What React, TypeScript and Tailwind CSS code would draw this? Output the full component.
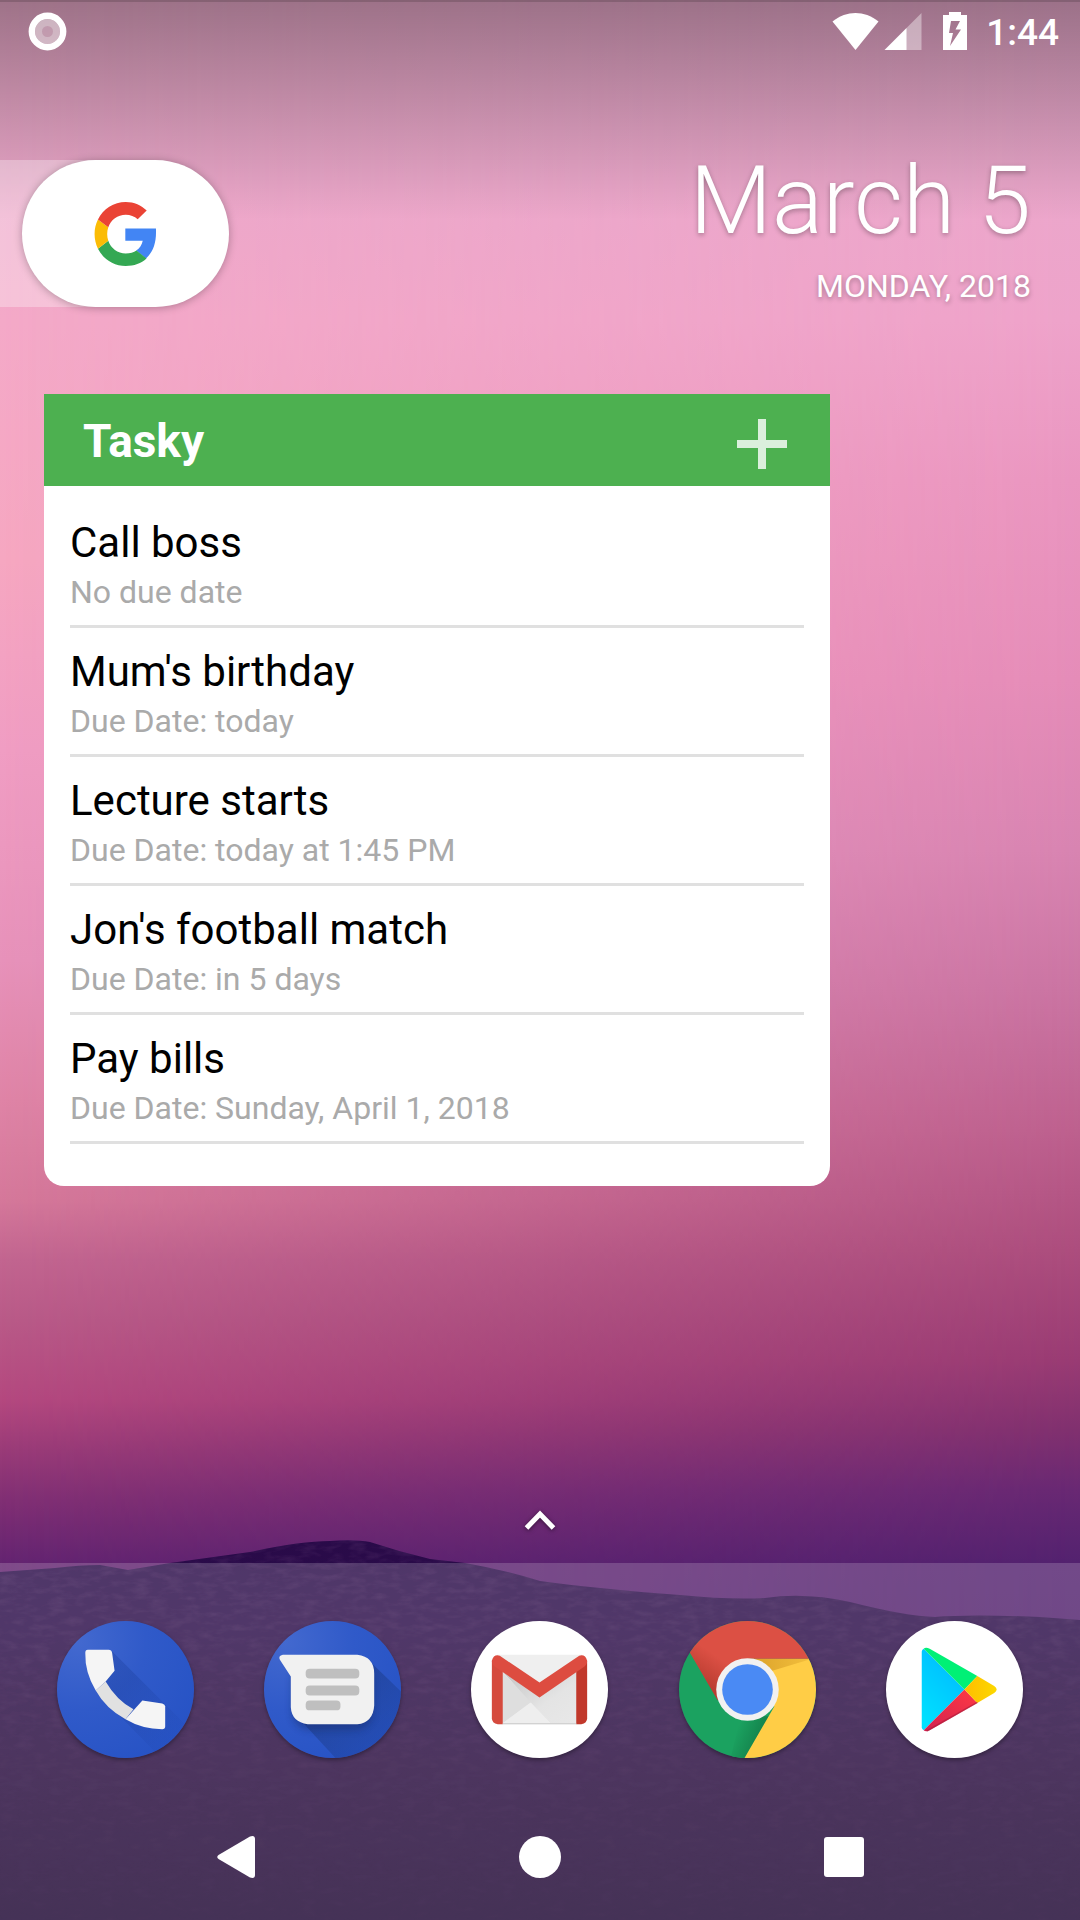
import type { ReactNode } from "react";

const tasks = [
  { title: "Call boss", due: "No due date" },
  { title: "Mum's birthday", due: "Due Date: today" },
  { title: "Lecture starts", due: "Due Date: today at 1:45 PM" },
  { title: "Jon's football match", due: "Due Date: in 5 days" },
  { title: "Pay bills", due: "Due Date: Sunday, April 1, 2018" },
];

function Wallpaper() {
  return (
    <div aria-hidden="true" className="absolute inset-0 overflow-hidden">
      <div className="absolute inset-0 bg-[linear-gradient(to_bottom,#e8a8c8_0px,#eca8ca_180px,#f4a9c8_320px,#f6a7c1_560px,#f09dc3_750px,#e792ba_960px,#df84a6_1100px,#d5789a_1200px,#c26590_1260px,#b95a88_1320px,#b4487f_1400px,#9a3b78_1450px,#812f74_1500px,#642471_1563px,#5c2270_1640px)]" />
      <div className="absolute inset-0 bg-[linear-gradient(to_bottom,#e4a6c8_0px,#eba7cb_180px,#eea3ca_320px,#ea96c0_480px,#e58cb8_680px,#d884b1_850px,#ca74a2_990px,#bd608e_1130px,#ac4d7d_1250px,#993b73_1360px,#80306f_1430px,#682873_1490px,#53226f_1563px,#50206c_1640px)] [mask-image:linear-gradient(to_right,transparent,black)]" />
      <svg className="absolute inset-x-0 bottom-0 h-[390px] w-full" viewBox="0 1530 1080 390" preserveAspectRatio="none">
        <defs>
          <linearGradient id="hill" x1="0" y1="0" x2="0" y2="1">
            <stop offset="0" stopColor="#290a49" />
            <stop offset="0.25" stopColor="#2a0c48" />
            <stop offset="0.6" stopColor="#26093c" />
            <stop offset="1" stopColor="#1d0632" />
          </linearGradient>
          <linearGradient id="grainFade" x1="0" y1="0" x2="0" y2="1">
            <stop offset="0" stopColor="#fff" stopOpacity="0.3" />
            <stop offset="0.7" stopColor="#fff" stopOpacity="0.08" />
            <stop offset="1" stopColor="#fff" stopOpacity="0.04" />
          </linearGradient>
          <filter id="grain" x="0" y="0" width="100%" height="100%">
            <feTurbulence type="fractalNoise" baseFrequency="0.06 0.16" numOctaves="3" seed="4" />
            <feColorMatrix values="0 0 0 0 0.45  0 0 0 0 0.2  0 0 0 0 0.45  0.9 0 0 0 -0.36" />
          </filter>
          <clipPath id="hillClip">
            <path d="M0 1572 L55 1568 Q80 1565 100 1565 L128 1570 L170 1563 L250 1552 Q300 1541 330 1541 Q355 1539 370 1542 Q400 1552 430 1559 L465 1563 Q505 1570 540 1581 Q600 1589 680 1595 Q730 1600 765 1598 Q805 1592 850 1602 Q905 1616 935 1617 Q970 1614 1040 1617 L1080 1620 V1920 H0 Z" />
          </clipPath>
          <mask id="grainMask">
            <rect x="0" y="1530" width="1080" height="390" fill="url(#grainFade)" />
          </mask>
        </defs>
        <g clipPath="url(#hillClip)">
          <rect x="0" y="1530" width="1080" height="390" fill="url(#hill)" />
          <g mask="url(#grainMask)">
            <rect x="0" y="1530" width="1080" height="390" filter="url(#grain)" />
          </g>
        </g>
      </svg>
      <div className="absolute inset-x-0 top-0 h-[220px] bg-linear-to-b from-black/32 to-transparent" />
      <div className="absolute inset-x-0 top-0 h-0.5 bg-black/15" />
    </div>
  );
}

function StatusBar() {
  return (
    <header className="flex h-[63px] items-start justify-between pt-3 pr-[21px] pl-7">
      <svg className="size-[39px]" viewBox="0 0 39 39" aria-hidden="true">
        <circle cx="19.5" cy="19.5" r="12.5" fill="#fff" opacity=".45" />
        <circle cx="19.5" cy="19.5" r="5.5" fill="#b37f9a" opacity=".5" />
        <circle cx="19.5" cy="19.5" r="15.7" fill="none" stroke="#fff" strokeWidth="6.4" />
      </svg>
      <div className="flex items-start text-white">
        <svg className="mt-px h-[37px] w-[47px]" viewBox="0 0 47 37" aria-hidden="true">
          <path fill="#fff" d="M.5 8.5C15-2.8 32-2.8 46.500 8.500L23.500 37Z" />
        </svg>
        <svg className="mt-px ml-[5px] h-[37px] w-[38px]" viewBox="0 0 38 37" aria-hidden="true">
          <path fill="#fff" opacity=".4" d="M22 15.500 37.500 0V37H22Z" />
          <path fill="#fff" d="M.5 37 22.500 15V37Z" />
        </svg>
        <svg className="ml-[21px] h-[38px] w-6" viewBox="0 0 24 38" aria-hidden="true">
          <path fill="#fff" fillRule="evenodd" d="M6 0H18V3H24V38H0V3H6ZM8 9 6 21H10L7 34 18 17.500H12.500L17 9Z" />
        </svg>
        <time className="ml-[19px] font-medium text-[37px] leading-[42px]">1:44</time>
      </div>
    </header>
  );
}

function GoogleLogo() {
  return (
    <svg className="h-16 w-16" viewBox="0 0 47 47" aria-hidden="true">
      <path fill="#4285f4" d="M45.500 19.500H23V28.500H35.800C35.100 31.800 33.500 34 31 35.700L38.200 41.500C43 37 46 31 45.500 19.500Z" />
      <path fill="#34a853" d="M23.300 47C29.500 47 34.700 45 38.600 41.500L31.200 35.700C29.200 37 26.500 37.900 23.300 37.900C17.400 37.900 12.300 34 10.500 28.500L2.900 34.300C6.700 41.900 14.500 47 23.300 47Z" />
      <path fill="#fbbc05" d="M10.500 28.500C9.400 25.200 9.400 21.800 10.500 18.600L2.900 12.800C-.4 19.400-.4 27.600 2.900 34.300Z" />
      <path fill="#ea4335" d="M23.300 9.300C26.700 9.300 29.700 10.400 32.100 12.700L38.700 6.200C34.700 2.500 29.500 0 23.300 0C14.500 0 6.700 5.200 2.900 12.800L10.500 18.600C12.300 13.100 17.400 9.300 23.300 9.300Z" />
    </svg>
  );
}

function SearchAndDate() {
  return (
    <section className="flex items-start justify-between pt-[97px]">
      <div className="relative h-[147px] w-[229px] pl-[22px]">
        <div className="absolute inset-y-0 left-0 w-24 bg-white/30" />
        <button
          type="button"
          aria-label="Google search"
          className="relative flex h-full w-full items-center justify-center rounded-full bg-white shadow-[0_1px_8px_rgba(0,0,0,0.28)]"
        >
          <GoogleLogo />
        </button>
      </div>
      <div className="pr-[49px] text-right text-white [text-shadow:0_2px_5px_rgba(0,0,0,0.3)]">
        <p className="font-light text-[95px] leading-[82px]">March 5</p>
        <p className="mt-6 text-[32px] leading-10">MONDAY, 2018</p>
      </div>
    </section>
  );
}

function TaskWidget() {
  return (
    <section className="mt-[87px] ml-11 w-[786px] max-w-full overflow-hidden rounded-b-[20px] bg-white">
      <div className="flex h-[92px] items-center justify-between bg-[#4db050] pr-[43px] pl-[39px]">
        <h1 className="mt-0.5 font-bold text-[46px] leading-14 text-white">Tasky</h1>
        <button type="button" aria-label="Add task" className="mt-2">
          <svg className="size-[50px]" viewBox="0 0 50 50" aria-hidden="true">
            <path fill="#fff" opacity=".8" d="M21 0H29V21H50V29H29V50H21V29H0V21H21Z" />
          </svg>
        </button>
      </div>
      <ul className="px-[26px] pt-[13px] pb-[42px]">
        {tasks.map((t) => (
          <li key={t.title} className="border-b-3 border-[#e0e0e0] pt-[19px] pb-[13px]">
            <p className="text-[42px] leading-[50px] text-black">{t.title}</p>
            <p className="mt-1 text-[32px] leading-10 text-[#aaaaaa]">{t.due}</p>
          </li>
        ))}
      </ul>
    </section>
  );
}

function Phone() {
  return (
    <svg className="size-full" viewBox="0 0 138 138" aria-hidden="true">
      <defs>
        <radialGradient id="blueDisc" cx=".15" cy=".15" r="1">
          <stop offset="0" stopColor="#4369cf" />
          <stop offset=".5" stopColor="#305ac9" />
          <stop offset="1" stopColor="#2753c5" />
        </radialGradient>
        <linearGradient id="phoneShade" x1=".3" y1=".3" x2=".9" y2=".9">
          <stop offset="0" stopColor="#1c3e9c" stopOpacity=".35" />
          <stop offset="1" stopColor="#1c3e9c" stopOpacity="0" />
        </linearGradient>
        <clipPath id="discClip"><circle cx="69" cy="69" r="69" /></clipPath>
      </defs>
      <circle cx="69" cy="69" r="69" fill="url(#blueDisc)" />
      <g clipPath="url(#discClip)">
        <path fill="url(#phoneShade)" d="M55 30 138 113V138H105L40 72Z" />
      </g>
      <path fill="#e1e1e1" d="M39 70 49 61Q60 80 77 89L69 99Q49 88 39 70Z" />
      <path fill="#f5f5f5" d="M31 29H52Q55 29 55.500 32L58 50 49 61 39 70Q28 52 28.500 32Q28.500 29 31 29Z" />
      <path fill="#f5f5f5" d="M69 99 86 80 106 83Q109 84 109 86V106Q109 109 106 109Q86 109 69 99Z" />
    </svg>
  );
}

function Messages() {
  return (
    <svg className="size-full" viewBox="0 0 138 138" aria-hidden="true">
      <defs>
        <linearGradient id="msgShade" x1=".3" y1=".3" x2="1" y2="1">
          <stop offset="0" stopColor="#16306f" stopOpacity=".45" />
          <stop offset=".9" stopColor="#16306f" stopOpacity=".12" />
        </linearGradient>
        <filter id="msgBlur" x="-20%" y="-20%" width="140%" height="150%"><feGaussianBlur stdDeviation="4" /></filter>
      </defs>
      <circle cx="69" cy="69" r="69" fill="url(#blueDisc)" />
      <g clipPath="url(#discClip)">
        <path fill="url(#msgShade)" d="M107 41 138 71V138H72L35 98Z" />
        <rect x="28" y="42" width="82" height="68" rx="18" fill="#132c66" opacity=".4" filter="url(#msgBlur)" />
      </g>
      <path fill="#f1f1f1" d="M19 34H94Q111 36 111 53V85Q110 102 94 104H44Q28 102 27 87V56L16 39Q14 35 19 34Z" />
      <g fill="#bfbfbf">
        <rect x="42" y="48" width="54" height="10" rx="4" />
        <rect x="42" y="65" width="54" height="10" rx="4" />
        <rect x="42" y="80" width="35" height="10" rx="4" />
      </g>
    </svg>
  );
}

function Gmail() {
  return (
    <svg className="size-full" viewBox="0 0 138 138" aria-hidden="true">
      <defs>
        <linearGradient id="mailFold" x1="0" y1="0" x2="1" y2="1">
          <stop offset="0" stopColor="#c4c4c4" />
          <stop offset=".6" stopColor="#e4e4e4" />
          <stop offset="1" stopColor="#e8e8e8" />
        </linearGradient>
      </defs>
      <circle cx="69" cy="69" r="69" fill="#fff" />
      <path fill="#efefef" d="M26 34H112V104H26Z" />
      <path fill="#dedede" d="M32 52 61 82 32 103Z" />
      <path fill="url(#mailFold)" d="M32 51 69 76 106 51V103H80L60 82Z" />
      <path fill="#eeeeee" d="M32 103 60 82 80 103Z" />
      <path fill="#d54a3d" d="M21 40 32 50V104H27Q21 103 21 98Z" />
      <path fill="#c1382b" d="M117 40 106 50V104H111Q117 103 117 98Z" />
      <path fill="#dd4c40" d="M29 35 69 62 109 35Q115 33 117 40Q117 44 114 46L69 77 24 46Q21 44 21 40Q23 33 29 35Z" />
      <path stroke="#c8c8c8" strokeWidth="1" d="M32 103.500H106" />
    </svg>
  );
}

function Chrome() {
  return (
    <svg className="size-full" viewBox="0 0 138 138" aria-hidden="true">
      <defs>
        <linearGradient id="redSweep" gradientUnits="userSpaceOnUse" x1="32" y1="70" x2="50" y2="44">
          <stop offset="0" stopColor="#b83c30" />
          <stop offset="1" stopColor="#dc5044" />
        </linearGradient>
        <linearGradient id="yellowSweep" x1="0" y1="0" x2="1" y2="0">
          <stop offset="0" stopColor="#d9a02a" />
          <stop offset="1" stopColor="#f4c03c" />
        </linearGradient>
        <linearGradient id="greenSweep" gradientUnits="userSpaceOnUse" x1="62" y1="100" x2="86" y2="110">
          <stop offset="0" stopColor="#1ba260" />
          <stop offset="1" stopColor="#14824c" />
        </linearGradient>
      </defs>
      <g clipPath="url(#discClip)">
        <path fill="#1ba260" d="M0 0H138V138H0Z" />
        <path fill="url(#greenSweep)" d="M62 96H100L67 138H52Z" />
        <path fill="#ffcd46" d="M69 38H138V138H66L96 86Z" />
        <path fill="url(#yellowSweep)" d="M69 38H134L94 50Z" />
        <path fill="url(#redSweep)" d="M11 32V0H138V38H69L39 80Z" />
      </g>
      <circle cx="69" cy="69" r="31.500" fill="#f1f1f1" />
      <circle cx="69" cy="69" r="25.500" fill="#4a8af4" />
    </svg>
  );
}

function Play() {
  return (
    <svg className="size-full" viewBox="0 0 138 138" aria-hidden="true">
      <defs>
        <linearGradient id="playBlue" x1=".8" y1="0" x2=".3" y2="1">
          <stop offset="0" stopColor="#00b8ff" />
          <stop offset="1" stopColor="#00e0ff" />
        </linearGradient>
        <linearGradient id="playRed" x1="1" y1="0" x2="0" y2="1">
          <stop offset="0" stopColor="#ff3a44" />
          <stop offset="1" stopColor="#d22050" />
        </linearGradient>
        <linearGradient id="playGold" x1="0" y1="0" x2="1" y2="0">
          <stop offset="0" stopColor="#ffbd00" />
          <stop offset="1" stopColor="#fcd800" />
        </linearGradient>
      </defs>
      <circle cx="69" cy="69" r="69" fill="#fff" />
      <path fill="url(#playBlue)" d="M38 28 79 69 38 110Q36 109 36 107V31Q36 29 38 28Z" />
      <path fill="#00f076" d="M38 28Q40 26 44 28L92 55.500 79 69Z" />
      <path fill="url(#playRed)" d="M38 110Q40 112 44 110L92 82.500 79 69Z" />
      <path fill="url(#playGold)" d="M92 55.500 109 65.500Q114 69 109 72.500L92 82.500 79 69Z" />
      <path fill="none" stroke="#a81c3c" strokeWidth="1.500" opacity=".6" d="M41 110.800 92 82" />
    </svg>
  );
}

const apps: { name: string; icon: ReactNode }[] = [
  { name: "Phone", icon: <Phone /> },
  { name: "Messages", icon: <Messages /> },
  { name: "Gmail", icon: <Gmail /> },
  { name: "Chrome", icon: <Chrome /> },
  { name: "Play Store", icon: <Play /> },
];

function Dock() {
  return (
    <footer className="bg-white/18">
      <nav aria-label="Favorite apps" className="grid grid-cols-5 justify-items-center px-[22px] pt-[58px]">
        {apps.map((a) => (
          <button
            key={a.name}
            type="button"
            aria-label={a.name}
            className="size-[137px] rounded-full shadow-[0_2px_4px_rgba(0,0,0,0.35)]"
          >
            {a.icon}
          </button>
        ))}
      </nav>
      <nav aria-label="System navigation" className="mt-9 flex h-[126px] items-center justify-center gap-[178px]">
        <button type="button" aria-label="Back" className="flex size-[126px] items-center justify-center">
          <svg className="h-11 w-10" viewBox="0 0 40 44" aria-hidden="true">
            <path fill="#fff" d="M2.500 20 34 1.500Q39 0 39 4V40Q39 44 34 42.500L2.500 24Q0 22 2.500 20Z" />
          </svg>
        </button>
        <button type="button" aria-label="Home" className="flex size-[126px] items-center justify-center">
          <span className="size-[42px] rounded-full bg-white" />
        </button>
        <button type="button" aria-label="Recent apps" className="flex size-[126px] items-center justify-center">
          <span className="size-10 rounded-[3px] bg-white" />
        </button>
      </nav>
    </footer>
  );
}

export default function App() {
  return (
    <div className="relative flex min-h-screen flex-col font-['Roboto',sans-serif]">
      <Wallpaper />
      <div className="relative flex grow flex-col">
        <StatusBar />
        <main className="flex grow flex-col">
          <SearchAndDate />
          <TaskWidget />
          <button type="button" aria-label="All apps" className="mx-auto mt-auto mb-[30px] px-4">
            <svg className="h-6 w-9 drop-shadow-[0_1px_2px_rgba(0,0,0,0.5)]" viewBox="0 0 36 24" aria-hidden="true">
              <path fill="none" stroke="#fff" strokeWidth="5" d="M4.500 19 18 5 31.500 19" />
            </svg>
          </button>
        </main>
        <Dock />
      </div>
    </div>
  );
}
